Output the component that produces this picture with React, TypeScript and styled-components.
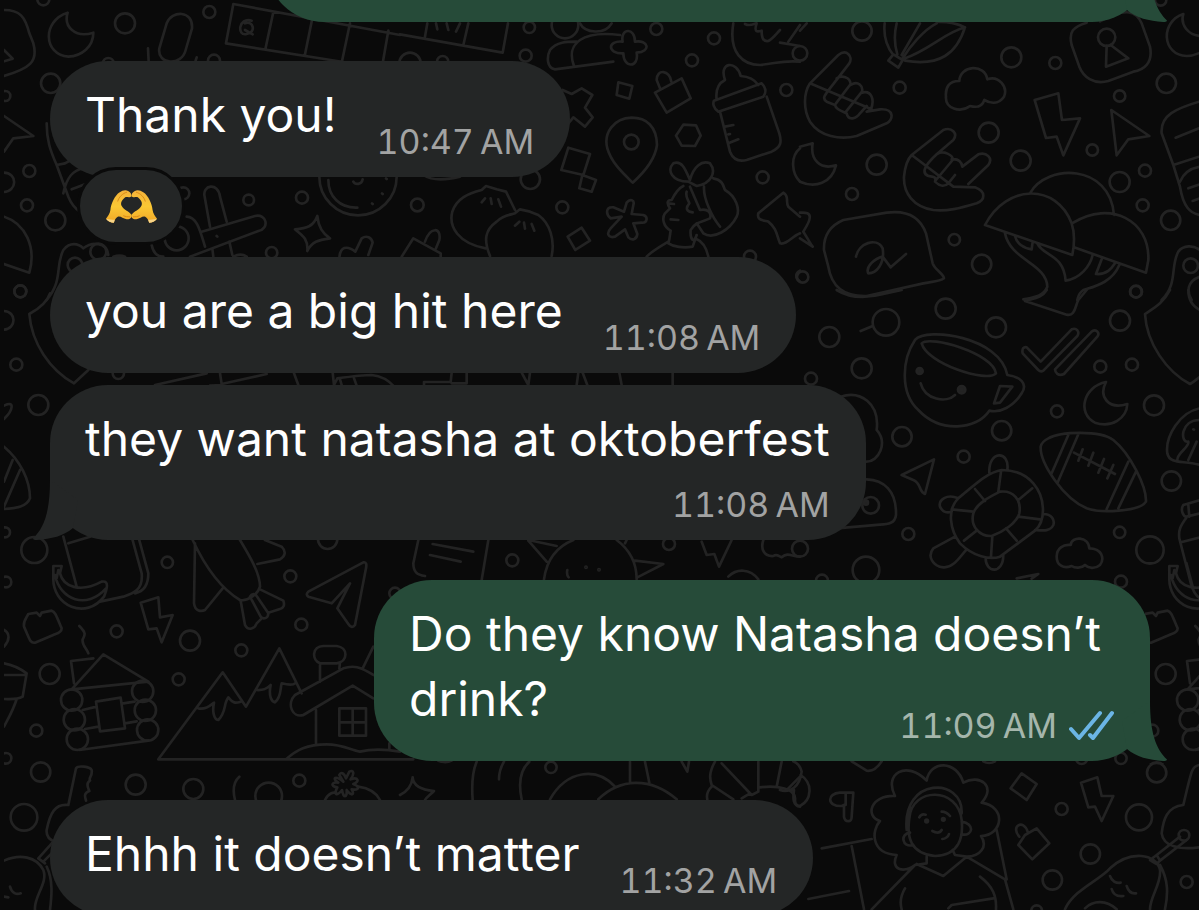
import React from "react";
import styled, { createGlobalStyle, css } from "styled-components";

const GlobalStyle = createGlobalStyle`
  * { box-sizing: border-box; }
  body { margin: 0; background: #0a0a0a; }
`;

type Side = "in" | "out";

const Screen = styled.main`
  position: relative;
  height: 100vh;
  overflow: hidden;
  background: #0a0a0a;
  font-family: Inter, "Liberation Sans", sans-serif;
`;

const Wallpaper = styled.svg`
  position: absolute;
  inset: 0;
  width: 100%;
  height: 100%;
  fill: none;
  stroke: #232323;
  stroke-width: 8;
  stroke-linecap: round;
  stroke-linejoin: round;
`;

/* The thread is scrolled: its first bubble lies mostly above the window. */
const Thread = styled.ol`
  position: relative;
  display: flex;
  flex-direction: column;
  list-style: none;
  margin: -94px 0 0;
  padding: 0 49px 0 50px;
`;

const Row = styled.li<{ $side: Side; $gap: number }>`
  display: flex;
  flex-direction: column;
  align-items: ${(p) => (p.$side === "out" ? "flex-end" : "flex-start")};
  margin-bottom: ${(p) => p.$gap}px;
`;

const layouts = {
  inline: css`
    display: flex;
    align-items: flex-end;
    gap: 40px;
  `,
  stacked: css`
    display: flex;
    flex-direction: column;
    gap: 12px;
    max-width: 100%;
  `,
  wrapped: css`
    display: block;
  `,
};

const Bubble = styled.article<{ $side: Side; $layout: keyof typeof layouts; $wide?: boolean }>`
  position: relative;
  max-width: min(776px, 100%);
  min-height: 116px;
  padding: 21px 36px 13px 35px;
  border-radius: 58px;
  color: #fff;
  background: ${(p) => (p.$side === "out" ? "#264b39" : "#242626")};
  ${(p) => layouts[p.$layout]}
  ${(p) => p.$wide && "max-width: 100%; width: 884px;"}
`;

const Text = styled.p<{ $layout: keyof typeof layouts }>`
  display: flow-root;
  margin: 0;
  padding-bottom: ${(p) => (p.$layout === "inline" ? 17 : 0)}px;
  font-size: 48px;
  line-height: 65px;
`;

const Meta = styled.span<{ $side: Side; $float?: boolean }>`
  display: flex;
  align-self: flex-end;
  align-items: center;
  gap: 12px;
  font-size: 34px;
  line-height: 44px;
  font-variant-numeric: tabular-nums;
  white-space: nowrap;
  color: ${(p) => (p.$side === "out" ? "#a5b6ac" : "#a2a3a3")};
  ${(p) => p.$float && "float: right; margin-top: 38px;"}
`;

const TailShape = styled.svg<{ $side: Side }>`
  position: absolute;
  bottom: 0;
  ${(p) => (p.$side === "out" ? "right: -17px;" : "left: -17px; transform: scaleX(-1);")}
  fill: ${(p) => (p.$side === "out" ? "#264b39" : "#242626")};
`;

const Reaction = styled.button`
  position: relative;
  display: flex;
  align-items: center;
  justify-content: center;
  width: 108px;
  height: 78px;
  margin: -10px 0 -3px 27px;
  padding: 0;
  border: 3px solid #0a0a0a;
  border-radius: 39px;
  background: #242626;
`;

const Tail = ({ side }: { side: Side }) => (
  <TailShape $side={side} width="45" height="60" viewBox="0 0 45 60" aria-hidden="true">
    <path d="M28 0C28 32 34 48 45 58.500C45 59.500 43 60 41 60C27 59 14 56 5 48L0 20Z" />
  </TailShape>
);

const ReadTicks = () => (
  <svg width="45" height="32" viewBox="0 0 45 32" fill="none" stroke="#6bb5e5" strokeWidth="4" strokeLinecap="round" strokeLinejoin="round" role="img" aria-label="Read">
    <path d="M2 19L10 28L31 3" />
    <path d="M21 25L24 28L43 3" />
  </svg>
);

const Hand = () => (
  <>
    <path fill="url(#skin)" d="M0 30C2 27 4 25 4.500 21C5 15 9 6 14 3C17 1 20 0 23 2C25 3 26 5 26 7C24 9 21 7 19 8.500C16 11 14.500 14 16 17C18 21 23 22 26 26C27 29 24 31 21 30.500C17 30 15 27 12 28C10 29 9 31 8 34C5 34 2 33 0 30Z" />
    <path fill="none" stroke="#d98a17" strokeWidth="1" strokeLinecap="round" d="M21 3C17 4 13 8 12 12M18 27C20 28 22 28 24 28" />
    <path fill="#f7d488" d="M0 30C3 31 6 31 9 31L8 34C5 34 2 33 0 30Z" />
  </>
);

const HeartHands = () => (
  <svg width="51" height="35" viewBox="0 0 52 35" role="img" aria-label="Heart hands">
    <defs>
      <linearGradient id="skin" x1="0" y1="0" x2="0" y2="1">
        <stop offset="0" stopColor="#f3b23a" />
        <stop offset="0.5" stopColor="#fbc834" />
        <stop offset="1" stopColor="#f0a728" />
      </linearGradient>
    </defs>
    <Hand />
    <g transform="translate(52 0) scale(-1 1)">
      <Hand />
    </g>
  </svg>
);

/* Doodles are drawn at three units per pixel, in patches placed by their own origin. */
type Patch = { at: [number, number]; dots: [number, number, number][]; lines: string[] };

const patches: Patch[] = [
  {
    at: [0, 0],
    dots: [
      [130, -2, 18], [375, 70, 30], [628, 36, 18], [152, 250, 29], [16, 288, 15], [88, 513, 18],
      [81, 616, 18], [166, 661, 30], [746, 600, 16], [906, 593, 18], [815, 758, 17], [61, 874, 18],
      [642, 182, 18], [1074, 530, 116], [295, 755, 24], [225, 795, 22], [550, 580, 18], [325, 190, 16],
      [530, 715, 36],
    ],
    lines: [
      "M203 38C125 62 130 165 205 170C245 168 280 140 280 98C225 115 190 80 203 38Z",
      "M12 150L38 176L12 184M12 30C60 30 75 50 88 100L100 130C115 185 90 205 12 228",
      "M12 348L100 408L40 415L12 455",
      "M500 70C515 30 580 30 576 85L557 150C545 200 470 195 478 145ZM444 145L446 185M590 172L586 185",
      "M700 12L1200 105M678 130L1030 186M700 12L678 130M820 36L796 148M936 60L914 168M1050 70L1026 184M1165 92L1148 190",
      "M755 62C715 50 710 110 740 102C770 98 760 60 735 70M735 90L758 103",
      "M140 370C140 420 150 450 170 495L195 490C230 470 260 460 280 480M170 495L205 590C215 615 225 625 240 635M190 580C200 530 220 510 250 505M215 568L255 553",
      "M12 518C55 520 50 575 12 576",
      "M12 650C75 670 110 740 88 818L12 792",
      "M630 680L614 590C605 555 655 545 660 590L680 665M605 695L765 648C800 640 810 685 775 693L570 770M640 770L637 745M697 765L688 725M560 650C590 650 600 690 615 740M455 735C460 760 475 770 490 770M650 708l2 2",
      "M952 648C955 680 965 700 990 715C955 720 935 725 922 753C925 715 905 705 885 688C920 685 940 680 952 648Z",
      "M985 540C985 590 1020 625 1072 623M1060 545C1065 555 1085 555 1088 538M1158 535l2 2M1146 580l2 2M1116 610l2 2",
      "M1018 775C1020 740 1040 735 1066 755L1085 715C1100 705 1115 712 1118 728L1105 765",
      "M140 900C190 840 165 800 190 750C210 725 235 730 250 745C275 725 320 725 325 765M340 770C355 765 365 766 375 770M700 770C715 762 730 763 740 770",
    ],
  },
  {
    at: [1200, 0],
    dots: [
      [388, 82, 17], [377, 167, 18], [769, 87, 18], [942, 115, 18], [876, 181, 18], [1159, 270, 18],
      [487, 622, 18], [52, 615, 19], [391, 538, 29], [694, 426, 22], [1088, 532, 18], [1050, 770, 18],
      [128, 185, 17], [495, 75, 40], [30, 190, 32],
    ],
    lines: [
      "M0 103L308 158L324 70M75 110L82 70M190 135L205 70M108 70L112 88M140 70L145 90M180 70L168 95",
      "M540 70C555 100 615 105 635 70",
      "M640 185L465 208C440 205 440 170 450 150C470 125 500 125 530 125M522 198C510 165 512 140 540 120C570 100 620 100 660 105",
      "M668 125C660 85 705 80 705 125C745 118 755 155 710 158C718 205 670 205 670 160C620 162 622 120 668 125Z",
      "M488 270L515 282L545 265L577 285L555 323L578 352L555 380L520 352L504 372",
      "M655 247L697 258L688 296L650 285Z",
      "M780 265L770 240C770 205 810 210 814 245M765 278L845 235L872 295L800 338Z",
      "M695 353C640 355 610 400 622 445C635 490 670 520 698 548C735 515 765 480 771 435C770 380 740 353 695 353Z",
      "M850 374L888 376L902 407L885 438L845 437L828 407Z",
      "M942 302L1085 250C1100 265 1098 280 1090 290L955 335C940 325 938 310 942 302ZM950 300C945 260 965 245 975 240C955 185 1010 180 1022 228C1050 230 1065 240 1075 255M960 335L990 455C1000 480 1020 485 1040 480L1115 455C1145 440 1145 425 1138 400L1100 290M975 380L1000 375M985 403L990 402M985 430L1015 418",
      "M505 443L570 462L550 525L484 510ZM547 525L588 540L575 575L538 565Z",
      "M257 745C175 730 145 680 157 635C170 595 205 580 245 570L258 558L290 568L318 575L345 630M245 607L255 595M275 612L272 595M303 620L295 598M270 768C250 720 255 690 290 665C310 645 330 645 345 640L360 628L390 635L415 645C450 670 465 720 455 768M345 677L358 665M375 686L372 668M403 692L395 672",
      "M5 770L40 715L122 760V770M75 725C90 680 125 680 118 720L108 745",
      "M665 650L632 655C618 645 615 620 640 622L672 635L680 608C690 595 705 600 700 615L695 642L730 645C745 650 742 670 725 668L700 670L712 702C710 720 695 722 685 712L675 688L645 710C625 715 618 700 632 685Z",
      "M503 710L545 683L570 722L526 750Z",
      "M865 545C815 545 800 510 820 490C845 480 855 505 870 540C880 500 905 480 930 490C950 515 935 550 890 558L865 545ZM870 560L900 630C925 625 935 640 930 655C910 665 885 665 872 690C870 715 880 735 890 705L878 740C850 745 820 740 805 730C810 715 810 700 812 692C790 680 785 655 795 640L810 625C800 610 800 600 815 600C825 580 835 565 850 558M912 560C910 595 935 650 960 680M940 535C970 540 970 560 975 570C1010 590 1020 630 1010 650C990 690 940 720 910 700L890 670M805 610L822 612M812 658L835 660M740 770C760 750 780 740 805 725M885 715C910 725 920 745 925 770M860 575C855 590 865 600 868 610C855 625 860 635 878 637",
      "M1075 640L1150 578C1170 590 1155 605 1165 620L1200 650M1075 640C1070 660 1085 660 1105 665C1130 685 1130 705 1140 730C1160 735 1175 710 1200 700",
      "M1000 70C985 160 1030 195 1080 195C1130 190 1150 180 1200 185M1035 72C1050 80 1060 72 1070 70C1060 100 1075 95 1085 92C1085 115 1090 125 1105 123C1120 115 1130 100 1140 90M1165 125L1200 75M1140 128L1200 138",
      "M1200 445C1170 470 1175 520 1200 545",
      "M70 525C100 545 140 540 180 530",
      "M1200 812C1185 820 1185 835 1200 845",
    ],
  },
  {
    at: [2400, 0],
    dots: [
      [186, 93, 29], [0, 160, 22], [299, 263, 18], [634, 172, 30], [766, 189, 18], [1099, 250, 29],
      [959, 288, 17], [566, 398, 30], [662, 482, 30], [877, 450, 17], [1035, 512, 18], [959, 546, 30],
      [230, 494, 30], [156, 582, 18], [463, 719, 17], [545, 793, 29], [1028, 616, 18], [1112, 661, 29],
      [1008, 875, 17], [920, 112, 26], [8, 831, 17], [1172, 797, 22], [1082, 0, 17],
    ],
    lines: [
      "M20 70L0 92",
      "M254 70C250 110 260 140 280 165M290 70C280 110 285 140 292 163M360 70L305 165M410 70C370 90 330 140 308 175M495 82C430 100 390 150 310 177M495 82C470 160 420 200 315 182M410 66C440 65 470 70 495 82M265 182L280 163L308 180L295 203Z",
      "M900 64C980 20 1010 35 1025 70L1050 140C1060 190 1030 210 1000 215L925 243C880 255 850 230 838 200L815 135C805 95 820 80 860 68",
      "M920 137L918 200L985 175L932 135",
      "M1150 42C1080 65 1085 165 1160 168C1180 168 1190 162 1200 158M1150 42C1140 75 1165 105 1200 108",
      "M30 250L115 165C140 145 160 170 148 190L108 242C70 290 65 295 80 305L105 315C108 330 130 335 140 340C145 365 170 355 180 340L200 318M215 328L200 335L240 328C285 325 280 360 260 370L170 408C120 420 60 410 30 365C10 330 10 280 30 250ZM110 235C125 225 150 230 152 252L108 310M152 255C175 240 190 260 186 275L138 335M186 278C215 270 225 300 212 330",
      "M478 243C480 195 555 190 562 238C595 225 625 260 612 290C595 315 570 310 553 300C545 325 525 322 510 318C480 340 435 325 438 290C435 260 450 242 478 243Z",
      "M704 300L775 280L786 360L840 355L790 466L770 410L738 414Z",
      "M934 330L1048 408L985 418L950 466Z",
      "M38 430C30 480 60 510 108 496C95 550 45 565 0 545M38 430L0 440",
      "M335 465L430 390C455 380 475 400 460 420L410 463C370 500 365 520 385 528C400 530 410 530 405 545C420 560 435 560 445 550L465 525M412 462C430 450 460 465 458 480L408 540M455 478C480 475 485 490 487 500L535 463C560 455 580 475 565 495L505 552M460 560L525 562C560 575 555 600 530 610C480 625 440 635 400 630C340 620 310 580 312 530C315 500 320 480 335 465Z",
      "M0 638C40 635 35 655 10 695C20 710 30 730 38 740L0 715",
      "M130 660L260 638C320 630 360 650 378 700L398 790C405 810 430 820 432 835C420 845 395 845 370 850L200 888C130 890 95 860 85 800L72 750C70 700 95 675 130 660Z",
      "M168 770C175 730 230 710 248 745C255 790 230 820 205 820C195 800 225 775 248 770L272 802L318 762",
      "M555 675C620 550 770 550 815 670C825 700 822 740 817 765L555 675ZM690 580C740 490 930 490 942 645M820 668C930 600 1050 660 1045 780L1038 818L822 742",
      "M615 700C630 780 740 790 742 860C730 890 700 892 670 898M645 708C650 730 670 745 695 748L698 725M712 730C730 770 790 760 797 842C840 835 870 800 878 765M905 778L888 822C920 825 935 805 945 790M958 795C935 850 880 860 850 870C835 880 835 890 832 900",
      "M1197 305C1130 325 1080 345 1085 400L1120 495L1140 560C1150 620 1170 640 1200 645M1120 495L1197 470M1127 413L1197 385M1140 545C1150 520 1170 505 1200 500M1165 565L1200 553M1178 603L1200 595",
      "M1085 900C1135 850 1110 800 1135 755C1150 735 1180 735 1200 750M1200 830C1160 845 1160 875 1175 900",
    ],
  },
  {
    at: [2400, 870],
    dots: [
      [258, 97, 40], [437, 56, 30], [588, 112, 30], [88, 141, 30], [185, 235, 30], [33, 266, 18],
      [901, 230, 18], [996, 224, 18], [960, 92, 30], [1008, 5, 18], [771, 364, 18], [1062, 346, 30],
      [605, 422, 29], [306, 440, 29], [491, 500, 18], [212, 646, 25], [325, 732, 18], [198, 840, 40],
      [1114, 573, 29], [959, 727, 17], [1050, 780, 41], [963, 875, 18], [359, 243, 9], [485, 299, 11],
      [198, 638, 6], [66, 872, 18], [0, 776, 24],
    ],
    lines: [
      "M182 123L218 108",
      "M110 0C150 25 200 25 250 12L305 0",
      "M740 0C725 25 700 25 675 33L800 74C825 80 825 50 835 30L860 0",
      "M345 150C380 110 600 140 622 255C660 260 685 280 665 310C640 350 600 370 568 362C530 420 420 430 355 360C300 310 305 210 345 150ZM365 160C390 135 580 190 588 250C560 280 380 220 365 160ZM362 280C375 330 440 340 465 315M600 288L637 290L600 338L582 340Z",
      "M680 172L722 215L815 118C830 112 840 125 832 138L730 242C725 245 720 245 715 240L668 190C665 175 672 170 680 172ZM765 238L875 125C890 115 900 130 892 140L792 252C775 260 765 248 765 238Z",
      "M918 276C850 290 830 370 885 398C935 415 980 385 982 342C925 360 895 320 918 276Z",
      "M1110 0C1090 40 1060 55 1035 72C1040 160 1100 245 1170 282C1190 270 1210 250 1240 230M1165 0C1165 30 1180 50 1200 60",
      "M122 320C180 300 240 340 230 420C265 460 235 515 200 515",
      "M200 568C250 570 290 600 288 675C285 700 265 703 240 704L110 715",
      "M305 555L402 508L375 612C355 605 365 580 340 570Z",
      "M605 540C570 545 540 570 475 625C440 660 450 720 480 760C520 800 570 810 600 800L705 722C740 690 735 620 700 580C670 545 635 540 605 540ZM600 605C570 620 530 640 520 670C510 710 540 740 575 738C610 725 650 700 658 670C665 630 640 600 600 605ZM603 545L595 605M525 597L555 633M455 658L520 665M492 752L530 722M577 740L573 800M618 715L650 752M655 680L720 688M655 630L697 595",
      "M568 548C565 480 630 480 622 540M475 625C440 610 415 630 420 650C430 672 445 668 455 665M730 672C755 672 765 690 760 705C750 725 730 722 705 720M465 740L400 775C380 800 400 830 430 832C460 835 480 800 500 778M557 802C555 850 610 855 610 795",
      "M745 445C780 425 900 420 940 450C990 490 1040 590 1038 635C1020 665 900 670 860 655C790 625 720 520 722 470C725 455 735 450 745 445ZM805 435L755 550M835 433L772 580M985 515L920 657M1008 545L955 655M822 488L945 552M848 478L835 512M880 488L865 527M912 507L895 548M940 525L922 565",
      "M812 765C815 738 865 738 868 775C905 775 915 805 900 825C885 838 865 835 855 825C845 835 825 835 815 828C790 838 770 825 770 800C770 775 790 762 812 765Z",
      "M1200 355C1140 365 1095 440 1102 490C1110 525 1150 510 1200 525M1200 390C1140 390 1140 460 1165 455C1170 470 1130 490 1132 510M1190 455L1165 510M1180 418l2 1",
      "M1150 645L1200 630M1150 645C1140 660 1150 680 1160 680L1200 670M1165 645L1168 680M1160 682C1140 710 1135 720 1138 745L1170 870C1175 900 1190 920 1200 925M1143 757L1200 742",
      "M650 865L715 852L695 866",
    ],
  },
  {
    at: [0, 720],
    dots: [[49, 374, 18], [115, 495, 30], [355, 400, 17], [15, 877, 15], [61, 154, 18]],
    lines: [
      "M150 160C140 190 110 210 88 222C95 310 150 390 222 430L265 390M12 497C45 480 40 510 12 537M12 213C50 215 50 265 12 269",
      "M12 620C60 660 90 720 90 775C80 800 50 805 12 807M12 725L38 660M12 800L60 690",
      "M465 435L620 400M660 400L665 432L800 402M665 435L630 437M882 400L895 435",
    ],
  },
  {
    at: [900, 1080],
    dots: [],
    lines: ["M98 38L102 75L112 55C150 50 190 45 215 45C250 48 270 65 285 82M120 58L125 75M162 55L170 77M372 77V66H452L455 38M500 38V70H455M665 38L685 75L690 38M835 38L830 75M848 38L862 75M958 38L965 75M1118 38V75"],
  },
  {
    at: [0, 1590],
    dots: [
      [103, 60, 39], [502, 97, 17], [871, 139, 18], [904, 284, 18], [350, 304, 18], [570, 332, 30],
      [149, 432, 30], [724, 361, 18], [536, 448, 18], [109, 602, 18], [122, 726, 29], [407, 764, 30],
      [580, 777, 30], [806, 798, 40], [898, 752, 18], [72, 862, 40], [18, 156, 16], [18, 685, 16],
      [215, 510, 32], [223, 569, 32], [232, 628, 32], [428, 484, 32], [436, 541, 32], [443, 600, 32],
      [983, 28, 29], [1185, 190, 17],
    ],
    lines: [
      "M190 20L230 170M205 40L270 20M395 20L425 130C430 180 400 190 370 200L300 215M415 20L445 130C445 165 430 185 405 190",
      "M160 108H185L180 130C190 170 240 190 305 155C330 150 320 180 312 200C260 270 155 230 160 140ZM165 135C180 210 260 240 318 175M175 120L170 145",
      "M85 252L110 248L120 258L125 248L155 242C165 245 168 255 185 295C185 305 175 310 165 313L105 338C90 340 90 330 72 290C70 275 75 270 85 252Z",
      "M422 218L475 202L480 262L518 255L485 337L470 295L445 298Z",
      "M238 288C260 310 255 315 248 328C245 345 260 355 265 370",
      "M215 478L310 373L445 455L215 478ZM222 460L213 393L280 385",
      "M248 540L290 530M370 520L404 515M255 597L295 590M375 580L410 574M238 660L445 632M288 515L362 503L375 595L300 604Z",
      "M12 400C40 405 60 415 80 430L68 500C50 510 30 507 12 507M12 435H78M50 507C40 540 25 565 12 590",
      "M578 30C620 120 670 180 720 210C745 215 775 190 780 170C780 130 750 80 720 30M585 40L582 220C585 245 605 245 615 240L668 175M795 30L845 50C860 65 855 80 840 88L772 102M722 212L735 285C745 305 765 295 770 280L785 265M780 178L850 212C855 225 850 235 840 237L805 248M750 200C755 190 765 190 770 198L805 250C805 265 790 270 782 260Z",
      "M925 185L1090 97C1100 95 1100 105 1098 115L1065 285C1058 295 1050 290 1045 282L1012 235L1050 160L995 220L925 200C918 195 920 190 925 185Z",
      "M475 688L668 427L738 530L838 355L905 490M595 535C625 540 635 520 642 518C635 550 645 570 655 570C680 545 670 520 685 502C700 520 705 520 722 515M770 480C800 482 805 470 812 465C805 500 815 515 825 517C845 500 840 475 845 460C865 465 880 465 885 460",
      "M475 688H1240M860 686C890 660 920 643 980 643C1030 643 1050 660 1080 665C1120 655 1160 658 1200 665",
      "M885 495L1030 415C1060 405 1080 410 1120 435M910 555L1058 467L1120 505M885 495C860 520 875 565 910 555M948 540V640M1168 640V660M1018 535H1098V617H1018ZM1058 535V617M1018 577H1098M960 400V455M1020 398L1018 415M960 400C935 390 935 350 970 348H1010C1045 352 1045 395 1010 400ZM1088 415L1120 350",
      "M718 740C695 760 700 790 705 810M975 810C985 790 1000 785 1010 790M1075 770C1110 775 1130 790 1140 810",
      "M1030 755L1018 735C1022 725 1032 728 1038 745L1048 725C1060 718 1065 730 1052 748C1075 740 1080 755 1060 762C1080 770 1078 782 1055 778C1065 795 1055 800 1040 780C1042 805 1030 805 1026 780C1010 800 1000 795 1012 772C990 770 995 755 1015 758C995 745 1005 735 1030 755Z",
      "M205 825L228 715C235 705 270 710 275 720C278 740 265 742 270 752C255 760 265 775 268 783C250 790 255 800 258 812M205 825C165 820 150 850 140 900C138 920 150 930 165 935",
      "M12 992C60 970 110 980 130 1020C145 1060 100 1100 105 1140M115 985L160 935M130 995L170 955M115 985L135 1000M140 1010C160 1050 155 1100 150 1140M30 1070C35 1090 50 1095 62 1090M12 1100L25 1102",
      "M12 300C30 310 30 330 12 350",
    ],
  },
  {
    at: [1200, 1590],
    dots: [[337, 91, 18], [807, 42, 18], [453, 712, 17], [558, 112, 2], [597, 119, 2]],
    lines: [
      "M55 30L40 100C40 125 50 135 75 138M265 30L245 150M98 42L220 65M90 75L182 95",
      "M432 148C440 90 470 50 520 30M650 30C690 60 710 100 710 148M385 32L440 95M385 30L470 48M675 40L680 30M705 92L790 102L712 142M502 120C500 130 502 138 506 142",
      "M905 35L920 75L943 72L957 110L995 30M1090 30C1080 60 1095 80 1120 78C1130 70 1135 78 1145 82C1165 65 1175 80 1200 80M985 140C1010 115 1050 115 1075 148M115 692C130 698 145 697 155 692",
      "M38 742C40 770 70 780 102 783C90 795 80 800 75 810M38 742C35 770 20 785 0 795M230 695C215 730 215 770 218 810M312 695C300 715 297 730 297 748M388 695C360 720 355 760 365 808M450 808C500 720 590 710 645 770M595 808C660 745 750 740 830 808M690 695V758M735 695L748 758M845 695L862 725L867 695",
      "M945 695C925 730 930 750 935 765L1000 808M965 700L1055 795L1075 785V695M935 770C920 785 920 800 922 808M1145 695L1130 770M1080 772C1130 765 1190 775 1185 810C1185 825 1190 830 1200 830M1025 805L1050 790M1165 775L1200 740",
    ],
  },
  {
    at: [2340, 2220],
    dots: [
      [845, 207, 18], [1130, 98, 29], [1077, 232, 39], [931, 342, 29], [817, 420, 29], [1220, 426, 18],
      [1023, 55, 17], [1212, 286, 16], [905, 55, 17], [770, 512, 16], [440, 243, 4], [490, 238, 4],
    ],
    lines: [
      "M0 150C30 160 60 140 65 95C60 75 50 68 40 64M62 105C100 130 95 180 60 198C35 195 40 170 42 150L30 150M215 64L260 92C280 95 295 80 305 64",
      "M220 158H180C140 160 140 200 185 198L192 195V230C195 248 215 248 215 230L220 158ZM197 160V195",
      "M345 168C310 100 380 60 440 122C450 60 530 60 550 128C600 100 650 140 605 188C680 200 670 285 603 288C625 320 600 350 560 350M345 168C270 165 255 230 300 243C275 270 270 340 350 345C330 390 370 400 405 375",
      "M388 235C380 290 390 340 465 348C540 345 550 290 545 240C535 140 395 140 388 235ZM380 270C365 110 550 110 545 220M390 278C360 280 365 325 400 315M545 245C585 250 580 290 545 283",
      "M418 232C423 222 430 222 437 224M485 215C495 215 505 222 510 228M457 273C470 280 480 278 485 270M487 297C495 297 505 290 507 282",
      "M440 350V370L405 375L275 508M518 330L525 345L560 350L490 408L410 372M560 350L675 418L700 508M650 270L680 418M600 410C640 440 650 470 648 508M375 445C360 470 360 490 365 508M505 505L515 495L640 475M125 325L275 297M215 318L252 508M85 477L207 453",
      "M725 100L770 132L740 180L692 145Z",
      "M903 128L952 112L965 168L1000 168L965 243L945 200L925 202Z",
      "M718 290C690 260 730 235 743 275M735 285L770 265L808 310L757 358L715 315Z",
      "M855 508C880 450 960 420 990 385C1050 330 1130 340 1140 390C1145 430 1110 470 1110 508M1110 360L1130 345L1140 362L1130 372ZM1130 345L1200 290M1140 362L1220 300M1140 375C1165 420 1165 460 1155 508M990 408C995 425 1010 430 1022 428M1040 438C1045 455 1055 462 1068 460M995 447C1000 465 1015 470 1030 468M915 505C940 480 980 480 1010 508",
      "M1257 75C1235 80 1235 90 1210 195C1160 200 1150 240 1145 280C1150 320 1200 330 1257 322",
      "M610 64C620 70 635 70 645 64",
    ],
  },
];

const Doodles = () => (
  <Wallpaper viewBox="0 0 1199 910" preserveAspectRatio="xMinYMin slice" aria-hidden="true">
    <defs>
      <clipPath id="edge">
        <rect x="4" y="0" width="1195" height="910" />
      </clipPath>
      <clipPath id="repeat">
        <rect x="1145" y="562" width="54" height="202" />
      </clipPath>
      <g id="doodles" transform="scale(0.33333)">
        {patches.map((p, i) => (
          <g key={i} transform={`translate(${p.at[0]} ${p.at[1]})`}>
            {p.dots.map(([x, y, r], n) => (
              <circle key={n} cx={x} cy={y} r={r} fill={r < 12 ? "#232323" : "none"} />
            ))}
            <path d={p.lines.join("")} />
          </g>
        ))}
      </g>
    </defs>
    <g clipPath="url(#edge)">
      <use href="#doodles" />
    </g>
    <g clipPath="url(#repeat)">
      <use href="#doodles" x="1116" />
    </g>
  </Wallpaper>
);

type Message = {
  side: Side;
  layout: keyof typeof layouts;
  text?: string;
  time?: string;
  gap: number;
  tail?: boolean;
  read?: boolean;
  loved?: boolean;
};

const messages: Message[] = [
  { side: "out", layout: "inline", gap: 39, tail: true },
  { side: "in", layout: "inline", text: "Thank you!", time: "10:47\u202fAM", gap: 15, loved: true },
  { side: "in", layout: "inline", text: "you are a big hit here", time: "11:08\u202fAM", gap: 12 },
  { side: "in", layout: "stacked", text: "they want natasha at oktoberfest", time: "11:08\u202fAM", gap: 40, tail: true },
  { side: "out", layout: "wrapped", text: "Do they know Natasha doesn’t drink?", time: "11:09\u202fAM", gap: 39, tail: true, read: true },
  { side: "in", layout: "inline", text: "Ehhh it doesn’t matter", time: "11:32\u202fAM", gap: 40 },
];

const MessageBubble = ({ message: m }: { message: Message }) => {
  const floating = m.layout === "wrapped";
  const meta = m.time && (
    <Meta $side={m.side} $float={floating}>
      <time>{m.time}</time>
      {m.read && <ReadTicks />}
    </Meta>
  );
  return (
    <Bubble $side={m.side} $layout={m.layout} $wide={!m.text}>
      {m.text && (
        <Text $layout={m.layout}>
          {m.text}
          {floating && meta}
        </Text>
      )}
      {!floating && meta}
      {m.tail && <Tail side={m.side} />}
    </Bubble>
  );
};

export default function App() {
  return (
    <Screen>
      <GlobalStyle />
      <Doodles />
      <Thread>
        {messages.map((m, i) => (
          <Row key={i} $side={m.side} $gap={m.gap}>
            <MessageBubble message={m} />
            {m.loved && (
              <Reaction type="button" aria-label="Reaction">
                <HeartHands />
              </Reaction>
            )}
          </Row>
        ))}
      </Thread>
    </Screen>
  );
}
